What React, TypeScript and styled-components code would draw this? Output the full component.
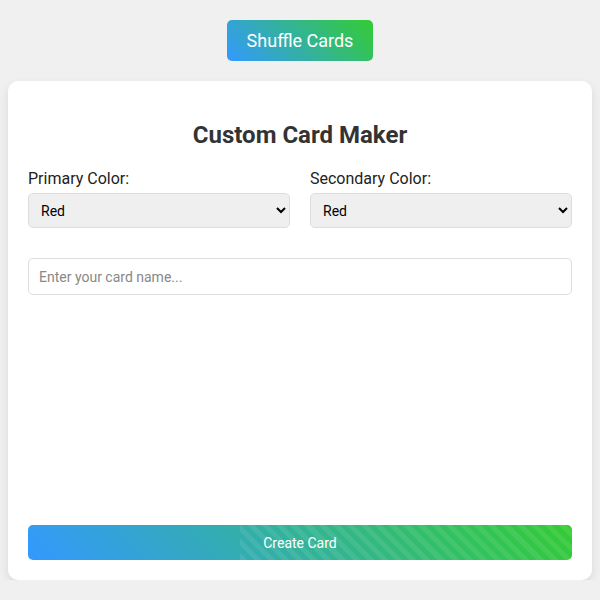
import { useState } from 'react';
import styled, { createGlobalStyle } from 'styled-components';

const GlobalStyle = createGlobalStyle`
    * {
        box-sizing: border-box;
    }
    body {
        margin: 0;
        background: #f0f0f0;
        font-family: Roboto, 'Liberation Sans', Arial, sans-serif;
        color: #333;
    }
`;

const Page = styled.div`
    display: flex;
    flex-direction: column;
    align-items: center;
    padding: 20px 8px 0;
    gap: 20px;
`;

const ShuffleButton = styled.button`
    height: 41px;
    padding: 0 20px;
    border: none;
    border-radius: 5px;
    background: linear-gradient(45deg, #3399ff, #33cc33);
    color: #fff;
    font-family: Roboto, sans-serif;
    font-size: 18px;
    cursor: pointer;
`;

const Card = styled.div`
    width: 100%;
    height: 499px;
    display: flex;
    flex-direction: column;
    padding: 20px;
    background: #fff;
    border-radius: 10px;
    box-shadow: 0 4px 10px rgba(0, 0, 0, 0.1);
`;

const Title = styled.h2`
    margin: 20px 0 20px;
    font-size: 24px;
    line-height: 28px;
    font-weight: 700;
    text-align: center;
    color: #333;
`;

const ColorRow = styled.div`
    display: grid;
    grid-template-columns: 1fr 1fr;
    gap: 20px;
`;

const Field = styled.div`
    display: flex;
    flex-direction: column;
    gap: 5px;
`;

const Label = styled.label`
    font-size: 16px;
    line-height: 19px;
    color: #222;
`;

const Select = styled.select`
    height: 35px;
    padding: 0 8px;
    border: 1px solid #ddd;
    border-radius: 5px;
    background: #efefef;
    font-family: Roboto, sans-serif;
    font-size: 14px;
    color: #000;
`;

const NameInput = styled.input`
    margin-top: 30px;
    height: 37px;
    padding: 0 10px;
    border: 1px solid #ddd;
    border-radius: 5px;
    font-family: Roboto, sans-serif;
    font-size: 14px;
    color: #333;

    &::placeholder {
        color: #888;
    }
`;

const CreateButton = styled.button`
    position: relative;
    overflow: hidden;
    margin-top: auto;
    height: 35px;
    border: none;
    border-radius: 5px;
    background: linear-gradient(45deg, #3399ff, #33cc33);
    color: #fff;
    font-family: Roboto, sans-serif;
    font-size: 14px;
    cursor: pointer;

    &::after {
        content: '';
        position: absolute;
        top: 0;
        bottom: 0;
        left: 39%;
        right: 0;
        background: repeating-linear-gradient(
            45deg,
            rgba(255, 255, 255, 0.08) 0 5px,
            transparent 5px 10px
        );
    }
`;

const colors = ['Red', 'Blue', 'Green', 'Yellow', 'Purple'];

const App = () => {
    const [primary, setPrimary] = useState('Red');
    const [secondary, setSecondary] = useState('Red');
    const [name, setName] = useState('');

    return (
        <>
            <GlobalStyle />
            <Page>
                <ShuffleButton>Shuffle Cards</ShuffleButton>
                <Card>
                    <Title>Custom Card Maker</Title>
                    <ColorRow>
                        <Field>
                            <Label>Primary Color:</Label>
                            <Select value={primary} onChange={(e) => setPrimary(e.target.value)}>
                                {colors.map((c) => (
                                    <option key={c}>{c}</option>
                                ))}
                            </Select>
                        </Field>
                        <Field>
                            <Label>Secondary Color:</Label>
                            <Select value={secondary} onChange={(e) => setSecondary(e.target.value)}>
                                {colors.map((c) => (
                                    <option key={c}>{c}</option>
                                ))}
                            </Select>
                        </Field>
                    </ColorRow>
                    <NameInput
                        placeholder='Enter your card name...'
                        value={name}
                        onChange={(e) => setName(e.target.value)}
                    />
                    <CreateButton>Create Card</CreateButton>
                </Card>
            </Page>
        </>
    );
};

export default App;
